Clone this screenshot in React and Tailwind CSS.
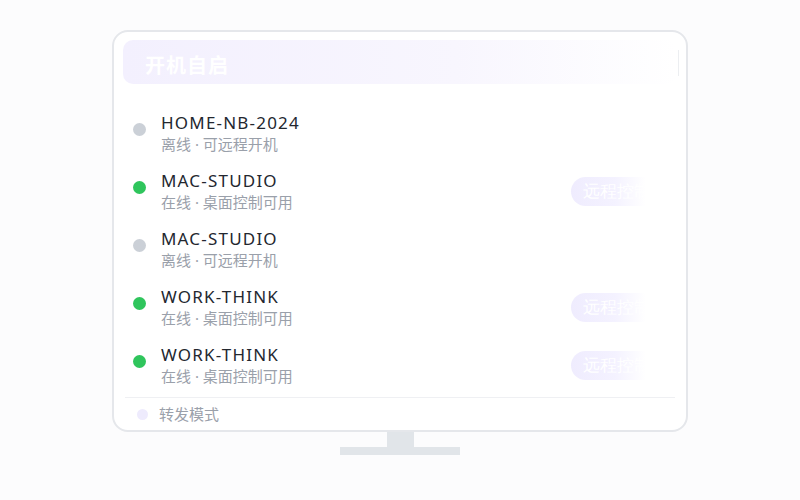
const DEVICES = [
  { name: 'HOME-NB-2024', online: false },
  { name: 'MAC-STUDIO', online: true },
  { name: 'MAC-STUDIO', online: false },
  { name: 'WORK-THINK', online: true },
  { name: 'WORK-THINK', online: true },
]

const FONT = { fontFamily: '"Noto Sans", "Noto Sans CJK SC", sans-serif' }

const DeviceRow = ({ device }) => (
  <div className="flex items-center h-[58px] px-[10px]">
    <div className={`w-[13px] h-[13px] rounded-full mt-[-7px] ${device.online ? 'bg-[#2fc55c]' : 'bg-[#cbd0d7]'}`} />
    <div className="ml-[15px] flex flex-col flex-1">
      <span className="text-[17px] leading-[22px] text-[#23272f] tracking-[1.2px]">{device.name}</span>
      <span className="text-[15px] leading-[20px] text-[#9aa0aa]">
        {device.online ? '在线 · 桌面控制可用' : '离线 · 可远程开机'}
      </span>
    </div>
    {device.online && (
      <div className="mr-[8px] h-[29px] w-[88px] rounded-full bg-gradient-to-r from-[#efecfe] via-[#f4f2ff] via-50% to-white to-85% flex items-center pl-[12px]">
        <span className="font-serif text-[17px] text-white whitespace-nowrap">远程控制</span>
      </div>
    )}
  </div>
)

export default function App() {
  return (
    <div className="w-[800px] h-[500px] bg-[#fcfcfd] flex flex-col items-center pt-[30px]" style={FONT}>
      <div className="w-[576px] h-[402px] border-2 border-[#e5e7eb] rounded-[16px] bg-white px-[9px] pt-[8px] flex flex-col">
        <div className="relative h-[46px] rounded-[10px] bg-gradient-to-r from-[#f3f0fe] via-[#f8f6fe] via-60% to-white flex items-center pl-[22px] pt-[8px]">
          <span className="text-[20px] font-bold text-white tracking-[1px]">开机自启</span>
          <div className="absolute right-[-2px] top-[10px] w-px h-[26px] bg-[#eceef1]" />
        </div>
        <div className="mt-[20px] flex flex-col">
          {DEVICES.map((d, i) => (
            <DeviceRow key={i} device={d} />
          ))}
        </div>
        <div className="mt-[3px] mx-[2px] border-t border-[#eff0f3] flex items-center h-[34px] pl-[12px]">
          <div className="w-[11px] h-[11px] rounded-full bg-[#eeebfd]" />
          <span className="ml-[11px] text-[15px] text-[#9aa0aa]">转发模式</span>
        </div>
      </div>
      <div className="w-[27px] h-[15px] bg-[#e1e5e9]" />
      <div className="w-[120px] h-[8px] bg-[#e1e5e9]" />
    </div>
  )
}
